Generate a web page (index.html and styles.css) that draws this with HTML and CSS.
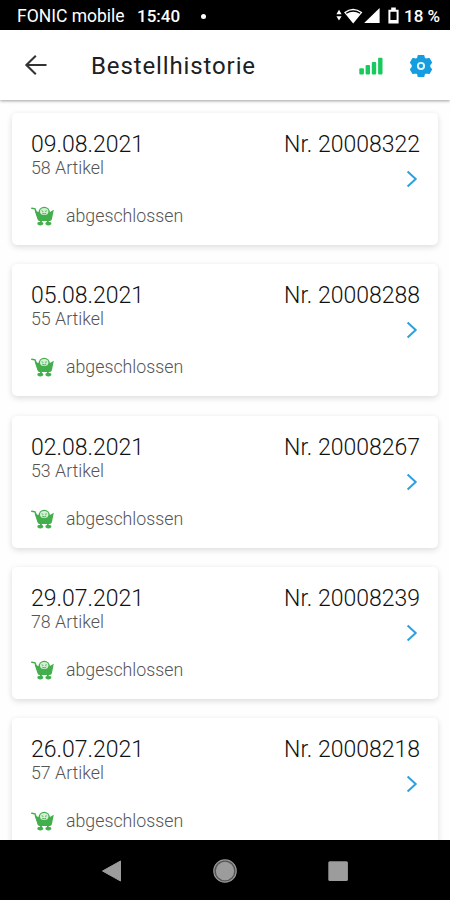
FILE: index.html
```
<!DOCTYPE html>
<html lang="de">
<head>
<meta charset="utf-8">
<title>Bestellhistorie</title>
<link rel="stylesheet" href="styles.css">
</head>
<body>
<svg class="defs" aria-hidden="true">
  <symbol id="cart" viewBox="0 0 24 20">
    <path d="M0.8 2.2L4 2.8L7.4 12" fill="none" stroke="#43ae4c" stroke-width="1.5" stroke-linecap="round"/>
    <circle cx="13.2" cy="6.6" r="5.8" fill="#43ae4c"/>
    <path d="M3.6 4.4L8.5 6.6Q13 10 18 6.6L22.8 3.8L20.9 13.2Q20.4 15 18.8 15H8.4Q7 15 6.5 13.2Z" fill="#43ae4c"/>
    <ellipse cx="13.2" cy="5.6" rx="4.2" ry="3.5" fill="#d5f0d5"/>
    <path d="M10.6 4.8L12.4 5.4M15.8 4.8L14 5.4M11.2 7.2Q13.2 8.4 15.2 7.2" fill="none" stroke="#43ae4c" stroke-width=".9"/>
    <path d="M10 14V17M16.8 14V17" stroke="#43ae4c" stroke-width="1.8"/>
    <ellipse cx="9.3" cy="17.6" rx="3" ry="1.8" fill="#43ae4c"/>
    <ellipse cx="17.4" cy="17.6" rx="3" ry="1.8" fill="#43ae4c"/>
  </symbol>
  <symbol id="chevron" viewBox="0 0 12 18">
    <path d="M1.6 1.4L9.7 9L1.6 16.6" fill="none" stroke="#2c9fdf" stroke-width="2"/>
  </symbol>
</svg>
<div class="screen">
  <div class="status">
    <span class="carrier">FONIC mobile</span>
    <span class="clock">15:40</span>
    <span class="dot"></span>
    <svg class="status-icons" width="64" height="20" viewBox="0 0 64 20" fill="#fff">
      <path d="M0.4 8.2L3 3.8L5.6 8.2ZM0.4 10.2H5.6L3 14.6Z"/>
      <path d="M8 6.2Q17 -0.8 26.4 6.2L17.2 17.4Z"/>
      <path d="M10.2 7.3Q17.2 2.7 24.2 7.3" fill="none" stroke="#000" stroke-width="1.3"/>
      <path d="M43.6 2V17H28.2Z"/>
      <path d="M53.4 4.8H61.6V16.4H53.4Z" fill="none" stroke="#fff" stroke-width="2"/>
      <path d="M55.2 1.4H59.8V4H55.2ZM54 14H61V16H54Z"/>
    </svg>
    <span class="battery">18 %</span>
  </div>
  <header class="bar">
    <svg class="back" width="24" height="22" viewBox="0 0 24 22" fill="none" stroke="#333" stroke-width="2.1"><path d="M22.5 11H3M11.8 1.8L2.4 11L11.8 20.2"/></svg>
    <h1>Bestellhistorie</h1>
    <svg class="signal" width="24" height="18" viewBox="0 0 24 18" fill="#18c95e"><rect x="0.3" y="11.2" width="4.6" height="6.2" rx="1"/><rect x="6.6" y="8" width="4.4" height="9.4" rx="1"/><rect x="12.8" y="5" width="4.4" height="12.4" rx="1"/><rect x="19.1" y="0.8" width="4.4" height="16.6" rx="1"/></svg>
    <svg class="gear" width="24" height="24" viewBox="0 0 24 24"><path fill="#149ddf" d="M9.3 1.6H14.7L15.3 4.3L17.1 5.3L20.1 4.6L22.4 8.6L20.6 10.9V13.1L22.4 15.4L20.1 19.4L17.1 18.7L15.3 19.7L14.7 22.4H9.3L8.7 19.7L6.9 18.7L3.9 19.4L1.6 15.4L3.4 13.1V10.9L1.6 8.6L3.9 4.6L6.9 5.3L8.7 4.3Z" stroke="#149ddf" stroke-width="1.4" stroke-linejoin="round"/><circle cx="12" cy="12" r="3.1" fill="#149ddf" stroke="#e4f6ff" stroke-width="1.9"/></svg>
  </header>
  <main class="list">
    <article class="card">
      <div class="row"><span>09.08.2021</span><span class="number">Nr. 20008322</span></div>
      <div class="count">58 Artikel</div>
      <svg class="chevron"><use href="#chevron"/></svg>
      <div class="state"><svg class="cart"><use href="#cart"/></svg><span>abgeschlossen</span></div>
    </article>
    <article class="card">
      <div class="row"><span>05.08.2021</span><span class="number">Nr. 20008288</span></div>
      <div class="count">55 Artikel</div>
      <svg class="chevron"><use href="#chevron"/></svg>
      <div class="state"><svg class="cart"><use href="#cart"/></svg><span>abgeschlossen</span></div>
    </article>
    <article class="card">
      <div class="row"><span>02.08.2021</span><span class="number">Nr. 20008267</span></div>
      <div class="count">53 Artikel</div>
      <svg class="chevron"><use href="#chevron"/></svg>
      <div class="state"><svg class="cart"><use href="#cart"/></svg><span>abgeschlossen</span></div>
    </article>
    <article class="card">
      <div class="row"><span>29.07.2021</span><span class="number">Nr. 20008239</span></div>
      <div class="count">78 Artikel</div>
      <svg class="chevron"><use href="#chevron"/></svg>
      <div class="state"><svg class="cart"><use href="#cart"/></svg><span>abgeschlossen</span></div>
    </article>
    <article class="card">
      <div class="row"><span>26.07.2021</span><span class="number">Nr. 20008218</span></div>
      <div class="count">57 Artikel</div>
      <svg class="chevron"><use href="#chevron"/></svg>
      <div class="state"><svg class="cart"><use href="#cart"/></svg><span>abgeschlossen</span></div>
    </article>
  </main>
  <nav class="nav">
    <svg width="24" height="24" viewBox="0 0 24 24"><path d="M2.5 12L20.5 2V22Z" fill="#9c9c9c" stroke="#9c9c9c" stroke-linejoin="round"/></svg>
    <svg width="24" height="24" viewBox="0 0 24 24"><circle cx="12" cy="12" r="11.2" fill="#555" stroke="#999" stroke-width="1.2"/><circle cx="12" cy="12" r="9.2" fill="#9c9c9c"/></svg>
    <svg width="24" height="24" viewBox="0 0 24 24"><rect x="2.3" y="2.3" width="19.6" height="19.6" rx="1.5" fill="#9c9c9c"/></svg>
  </nav>
</div>
</body>
</html>
```
FILE: styles.css
```
* { box-sizing: border-box; }
body { margin: 0; font-family: Roboto, "Liberation Sans", sans-serif; background: #fff; }
.defs { position: absolute; width: 0; height: 0; }
.screen { width: 450px; height: 900px; display: flex; flex-direction: column; overflow: hidden; }
.status { flex: none; height: 30px; padding: 2px 9px 0 17px; background: #000; color: #fff; display: flex; align-items: center; font-size: 17px; font-weight: 500; white-space: nowrap; }
.carrier { width: 120px; font-size: 17.5px; font-weight: 400; }
.clock { width: 64px; }
.dot { width: 5px; height: 5px; border-radius: 50%; background: #fff; }
.status-icons { margin-left: auto; }
.battery { width: 37px; margin-left: 4px; }
.bar { flex: none; height: 70px; padding: 0 17px 0 24px; display: flex; align-items: center; background: #fff; box-shadow: 0 1px 3px rgba(0, 0, 0, .38); z-index: 1; }
h1 { margin: 2px auto 0 43px; font-size: 24px; font-weight: 400; color: #202020; letter-spacing: .88px; }
.signal { margin: 1px 26px 0 0; }
.gear { margin-top: 1px; }
.list { flex: 1; min-height: 0; overflow: hidden; padding: 13px 12px 0; background: #fefefe; display: flex; flex-direction: column; gap: 19.25px; }
.card { flex: none; height: 132px; padding: 18px 18px 0 19px; display: flex; flex-direction: column; background: #fff; border-radius: 5px; box-shadow: 0 2px 6px rgba(0, 0, 0, .14); }
.row { display: flex; justify-content: space-between; font-size: 23px; line-height: 27px; font-weight: 300; color: #111; }
.count { font-size: 17.8px; line-height: 22px; margin-top: -1px; font-weight: 300; color: #555; }
.chevron { width: 12px; height: 18px; align-self: flex-end; margin: -9px 2px 0 0; }
.state { display: flex; align-items: center; margin-top: 16px; height: 24px; font-size: 17.75px; font-weight: 300; color: #555; }
.cart { width: 24px; height: 20px; margin-right: 11px; }
.nav { flex: none; height: 60px; padding: 1px 100px 0; background: #000; display: flex; align-items: center; justify-content: space-between; }
```
